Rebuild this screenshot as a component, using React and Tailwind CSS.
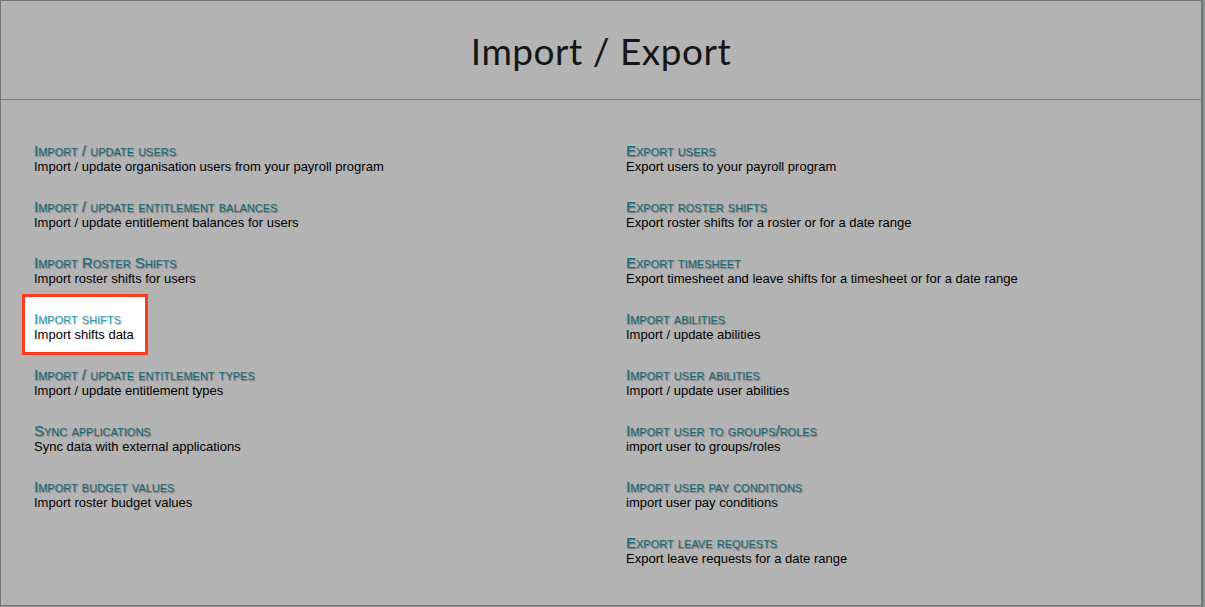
import React from 'react';

const left = [
    ['Import / update users', 'Import / update organisation users from your payroll program'],
    ['Import / update entitlement balances', 'Import / update entitlement balances for users'],
    ['Import Roster Shifts', 'Import roster shifts for users'],
    ['Import shifts', 'Import shifts data', true],
    ['Import / update entitlement types', 'Import / update entitlement types'],
    ['Sync applications', 'Sync data with external applications'],
    ['Import budget values', 'Import roster budget values'],
];

const right = [
    ['Export users', 'Export users to your payroll program'],
    ['Export roster shifts', 'Export roster shifts for a roster or for a date range'],
    ['Export timesheet', 'Export timesheet and leave shifts for a timesheet or for a date range'],
    ['Import abilities', 'Import / update abilities'],
    ['Import user abilities', 'Import / update user abilities'],
    ['Import user to groups/roles', 'import user to groups/roles'],
    ['Import user pay conditions', 'import user pay conditions'],
    ['Export leave requests', 'Export leave requests for a date range'],
];

const Item = ({ title, text, active }) => {
    if (active) {
        return (
            <div className="h-[56px] flex flex-col">
                <div className="-ml-[12px] -mt-[17px] w-[126px] h-[61px] shrink-0 border-[3px] border-[#ff3b1f] bg-white pl-[9px] pt-[14px]">
                    <div className="text-[15px] leading-[16px] text-[#2a9aae] [font-variant:small-caps] [text-shadow:1px_1px_1px_rgba(0,0,0,0.25)]">
                        {title}
                    </div>
                    <div className="text-[13px] leading-[16px] text-black">{text}</div>
                </div>
            </div>
        );
    }
    return (
        <div className="h-[56px]">
            <div className="text-[15px] leading-[16px] text-[#1d6b79] [font-variant:small-caps] [text-shadow:1px_1px_1px_rgba(0,0,0,0.35)]">
                {title}
            </div>
            <div className="text-[13px] leading-[16px] text-black">{text}</div>
        </div>
    );
};

export default function App() {
    return (
        <div className="w-[1205px] h-[607px] bg-[#8e9292] font-['Liberation_Sans',Arial,sans-serif]">
            <div className="w-[1203px] h-[606px] border border-[#767676] border-r-2 bg-[#b3b3b3]">
                <div className="h-[99px] border-b border-[#7a7a7a] flex items-center justify-center">
                    <h1 className="text-[37px] text-[#151515] font-['Lato',sans-serif] font-normal tracking-[0.5px] pt-[2px]">
                        Import / Export
                    </h1>
                </div>
                <div className="grid grid-cols-[592px_1fr] pl-[33px] pt-[43px]">
                    <div>
                        {left.map(([t, d, a]) => (
                            <Item key={t} title={t} text={d} active={a} />
                        ))}
                    </div>
                    <div>
                        {right.map(([t, d]) => (
                            <Item key={t} title={t} text={d} />
                        ))}
                    </div>
                </div>
            </div>
        </div>
    );
}
